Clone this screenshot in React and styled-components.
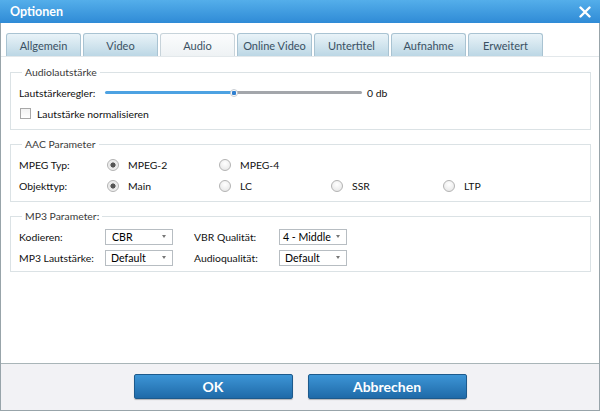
import React from 'react';
import styled, { createGlobalStyle } from 'styled-components';

const GlobalStyle = createGlobalStyle`
  html, body { margin: 0; padding: 0; background: #fff; }
  body { font-family: Lato, "Open Sans", sans-serif; font-size: 10.4px; color: #111; }
  * { box-sizing: border-box; }
`;

const Window = styled.div`
  width: 600px;
  height: 411px;
  display: flex;
  flex-direction: column;
  border: 1px solid #98a4aa;
  border-top: none;
  background: #fff;
`;

const TitleBar = styled.div`
  height: 23px;
  margin: 0 -1px;
  display: flex;
  align-items: center;
  justify-content: space-between;
  padding: 0 9px 0 10px;
  background: linear-gradient(#54aeea, #2f8bd6);
  color: #fff;
  font-weight: 700;
  font-size: 12.5px;
`;

const Body = styled.div`
  flex: 1;
  padding-top: 10px;
  display: flex;
  flex-direction: column;
`;

const TabBar = styled.div`
  display: flex;
  gap: 2px;
  padding-left: 5px;
  border-bottom: 1px solid #e3e8eb;
`;

const Tab = styled.div`
  width: 75px;
  height: 23px;
  display: flex;
  align-items: center;
  justify-content: center;
  border: 1px solid ${p => (p.$active ? '#c7d3da' : '#a9c3d2')};
  border-bottom: none;
  border-radius: 3px 3px 0 0;
  background: ${p => (p.$active ? 'linear-gradient(#fbfcfd, #eef2f4)' : 'linear-gradient(#e9f3f8, #bcd7e5)')};
  color: #3a5163;
  font-size: 11px;
  white-space: nowrap;
`;

const Content = styled.div`
  padding: 8px 8px 0 9px;
  display: flex;
  flex-direction: column;
  gap: 7px;
`;

const Group = styled.fieldset`
  margin: 0;
  padding: 3px 8px ${p => p.$pb ?? 5}px 8px;
  border: 1px solid #dbe2e5;
  display: flex;
  flex-direction: column;
`;

const Legend = styled.legend`
  padding: 0 3px;
  margin-left: 3px;
  color: #3a3a3a;
  line-height: 14px;
`;

const Row = styled.div`
  height: 21px;
  display: flex;
  align-items: center;
`;

const Label = styled.span`
  width: ${p => p.$w || 86}px;
  flex-shrink: 0;
  white-space: nowrap;
`;

const SliderTrack = styled.div`
  position: relative;
  width: 257px;
  height: 3px;
  border-radius: 2px;
  background: linear-gradient(to right, #4da2e2 0 50%, #a3a6ab 50% 100%);
`;

const SliderThumb = styled.div`
  position: absolute;
  left: 50%;
  top: 50%;
  width: 8px;
  height: 8px;
  margin: -4px 0 0 -4px;
  border-radius: 50%;
  background: radial-gradient(circle, #2f7fd0 0 2px, #fff 2.5px);
  border: 1px solid #c6ccd2;
`;

const SliderValue = styled.span`
  margin-left: 5px;
`;

const CheckBox = styled.span`
  width: 11px;
  height: 11px;
  margin: 0 6px 0 1px;
  border: 1px solid #a8a8a8;
  background: linear-gradient(#f2f2f2, #fff);
`;

const RadioItem = styled.label`
  width: ${p => p.$w || 112}px;
  display: flex;
  align-items: center;
  gap: 9px;
`;

const Radio = styled.span`
  width: 12px;
  height: 12px;
  border-radius: 50%;
  border: 1px solid #b3b3b3;
  background: ${p => (p.$on
    ? 'radial-gradient(circle, #555 0 2.3px, #e6e6e6 2.8px, #fafafa)'
    : 'radial-gradient(circle at 50% 35%, #fff, #e3e3e3)')};
  flex-shrink: 0;
`;

const Select = styled.div`
  width: 68px;
  height: 16px;
  border: 1px solid #b7bdc2;
  background: #fff;
  display: flex;
  align-items: center;
  justify-content: space-between;
  gap: 3px;
  padding: 0 6px 0 ${p => p.$pl ?? 5}px;
  margin-right: 21px;
  color: #000;
  font-size: 10.6px;
  white-space: nowrap;
`;

const Caret = styled.span`
  flex-shrink: 0;
  width: 0;
  height: 0;
  border-left: 2px solid transparent;
  border-right: 2px solid transparent;
  border-top: 3px solid #777;
`;

const Footer = styled.div`
  height: 47px;
  background: #f2f2f5;
  border-top: 1px solid #a9b5b8;
  display: flex;
  align-items: center;
  justify-content: center;
  gap: 15px;
  padding-bottom: 1px;
`;

const Button = styled.button`
  width: 159px;
  height: 25px;
  border: 1px solid #1d5a8c;
  border-radius: 2px;
  background: linear-gradient(#3d95d6, #1f6aa8);
  color: #fff;
  font-family: Lato, "Open Sans", sans-serif;
  font-weight: 700;
  font-size: 14px;
  box-shadow: 0 1px 1px rgba(0, 0, 0, 0.25);
`;

const CloseIcon = () => (
  <svg width="12" height="12" viewBox="0 0 12 12">
    <path d="M1.5 1.5 L10.5 10.5 M10.5 1.5 L1.5 10.5" stroke="#fff" strokeWidth="2.4" strokeLinecap="round" />
  </svg>
);

const tabs = ['Allgemein', 'Video', 'Audio', 'Online Video', 'Untertitel', 'Aufnahme', 'Erweitert'];

export default function App() {
  return (
    <>
      <GlobalStyle />
      <Window>
        <TitleBar>
          <span>Optionen</span>
          <CloseIcon />
        </TitleBar>
        <Body>
          <TabBar>
            {tabs.map(t => (
              <Tab key={t} $active={t === 'Audio'}>{t}</Tab>
            ))}
          </TabBar>
          <Content>
            <Group>
              <Legend>Audiolautstärke</Legend>
              <Row>
                <Label>Lautstärkeregler:</Label>
                <SliderTrack>
                  <SliderThumb />
                </SliderTrack>
                <SliderValue>0 db</SliderValue>
              </Row>
              <Row>
                <CheckBox />
                <span>Lautstärke normalisieren</span>
              </Row>
            </Group>

            <Group>
              <Legend>AAC Parameter</Legend>
              <Row>
                <Label $w={88}>MPEG Typ:</Label>
                <RadioItem><Radio $on />MPEG-2</RadioItem>
                <RadioItem><Radio />MPEG-4</RadioItem>
              </Row>
              <Row>
                <Label $w={88}>Objekttyp:</Label>
                <RadioItem><Radio $on />Main</RadioItem>
                <RadioItem><Radio />LC</RadioItem>
                <RadioItem><Radio />SSR</RadioItem>
                <RadioItem><Radio />LTP</RadioItem>
              </Row>
            </Group>

            <Group $pb={3}>
              <Legend>MP3 Parameter:</Legend>
              <Row>
                <Label>Kodieren:</Label>
                <Select $pl={6}>CBR<Caret /></Select>
                <Label $w={85}>VBR Qualität:</Label>
                <Select $pl={3}>4 - Middle<Caret /></Select>
              </Row>
              <Row>
                <Label>MP3 Lautstärke:</Label>
                <Select>Default<Caret /></Select>
                <Label $w={85}>Audioqualität:</Label>
                <Select>Default<Caret /></Select>
              </Row>
            </Group>
          </Content>
        </Body>
        <Footer>
          <Button>OK</Button>
          <Button>Abbrechen</Button>
        </Footer>
      </Window>
    </>
  );
}
